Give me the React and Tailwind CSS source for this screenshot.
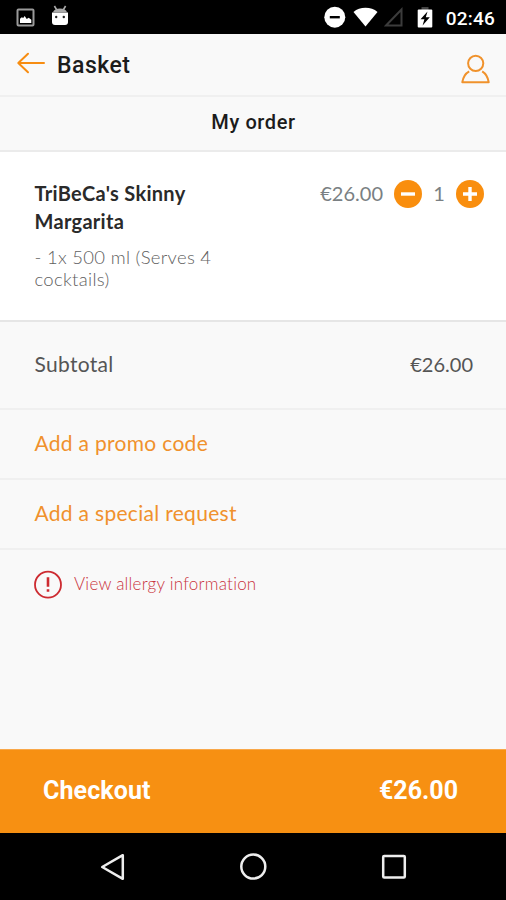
import { useState } from 'react';

const PRICE = 26;

const formatPrice = (value) => `€${value.toFixed(2)}`;

const StatusBar = () => (
    <div className="h-[34px] bg-black text-white flex items-center pl-4 pr-[11px] shrink-0">
        <svg width="19" height="19" viewBox="0 0 19 19" className="shrink-0">
            <rect x="1.5" y="1.5" width="16" height="16" rx="1" fill="none" stroke="#9a9a9a" strokeWidth="2" />
            <path d="M4 15v-4.2l1.8-1.6 1.4.8 1.5-2 2 3 2-1.2 2.6 2V15z" fill="#fff" />
        </svg>
        <svg width="18" height="21" viewBox="0 0 18 21" className="ml-4 -mt-1 shrink-0">
            <path d="M3.4 1l2.4 4M14.6 1l-2.4 4" stroke="#aaa" strokeWidth="1.6" />
            <path d="M2 7.2Q3.5 3.5 9 3.5T16 7.2z" fill="#aaa" />
            <path d="M1 7.5h16v9.5q0 3-3 3H4q-3 0-3-3z" fill="#fff" />
            <circle cx="5.2" cy="12" r="1.2" fill="#222" />
            <circle cx="12.8" cy="12" r="1.2" fill="#222" />
        </svg>
        <div className="flex-1" />
        <svg width="22" height="22" viewBox="0 0 22 22" className="shrink-0">
            <circle cx="10.8" cy="11.2" r="10.5" fill="#fff" />
            <rect x="5.8" y="10" width="10" height="2.4" fill="#000" />
        </svg>
        <svg width="25" height="20" viewBox="0 0 25 20" className="ml-[7px] shrink-0">
            <path d="M.5 5Q5.5.8 12.5.8T24.500 5L12.500 19.500z" fill="#fff" />
        </svg>
        <svg width="20" height="20" viewBox="0 0 20 20" className="ml-[6px] shrink-0">
            <path d="M2 18.500L17.500 2.500v16z" fill="none" stroke="#3c3c3c" strokeWidth="2" />
        </svg>
        <svg width="16" height="22" viewBox="0 0 16 22" className="ml-[13px] shrink-0">
            <rect x="4.5" y="1" width="7" height="3" fill="#444" />
            <rect x=".7" y="3.5" width="14.6" height="18" rx="1" fill="#fff" />
            <path d="M10.5 5.5L3.5 13.3h3.9L5.600 19.500 12.800 11.300H8.800z" fill="#000" />
        </svg>
        <span className="ml-[13px] text-[19px] leading-none font-medium tracking-[0.2px] mt-[3px]">02:46</span>
    </div>
);

const Header = () => (
    <header className="h-[63px] border-b-2 border-[#f0f0f0] flex items-center px-4 shrink-0">
        <button aria-label="Back" className="pb-1">
            <svg width="29" height="22" viewBox="0 0 29 22" fill="none" stroke="#f78d12" strokeWidth="2" strokeLinecap="round" strokeLinejoin="round">
                <path d="M28 11H2.5M12 1.8L2.3 11l9.7 9.2" />
            </svg>
        </button>
        <h1 className="ml-3 pt-[3px] text-[23px] font-medium tracking-[0.5px] text-[#1c1c1c]">Basket</h1>
        <button aria-label="Account" className="ml-auto mt-2">
            <svg width="29" height="30" viewBox="0 0 29 30" fill="none" stroke="#f0922c" strokeWidth="2" strokeLinejoin="round">
                <circle cx="14.7" cy="9.3" r="7.6" />
                <path d="M8.2 17.3Q2.5 20.5 1.3 28.2h26.4Q26.5 20.5 21.2 17.3" />
            </svg>
        </button>
    </header>
);

const QuantityButton = ({ label, path, onClick }) => (
    <button aria-label={label} onClick={onClick} className="size-7 rounded-full bg-[#f98e0e] shrink-0">
        <svg width="28" height="28" viewBox="0 0 28 28" stroke="#fff" strokeWidth="3.4">
            <path d={path} />
        </svg>
    </button>
);

const LinkRow = ({ children }) => (
    <button className="block w-full text-left pl-[34.5px] pb-[3px] border-b-2 border-[#f0f0f0] text-[#f0912d] text-[21px] tracking-[0.3px] font-['Lato',sans-serif] shrink-0 h-[70px]">
        {children}
    </button>
);

const NavBar = () => (
    <nav className="h-[67px] bg-black flex items-center justify-center gap-[113px] shrink-0">
        <svg width="28" height="28" viewBox="0 0 28 28" fill="none" stroke="#eee" strokeWidth="2.5" strokeLinejoin="round">
            <path d="M4.2 14L24.8 2.2v23.6z" />
        </svg>
        <svg width="28" height="28" viewBox="0 0 28 28" fill="none" stroke="#eee" strokeWidth="2.5">
            <circle cx="14.3" cy="13.6" r="12" />
        </svg>
        <svg width="28" height="28" viewBox="0 0 28 28" fill="none" stroke="#eee" strokeWidth="2.5">
            <rect x="3.2" y="3" width="21.6" height="21.6" rx="1" />
        </svg>
    </nav>
);

const App = () => {
    const [quantity, setQuantity] = useState(1);
    const total = formatPrice(PRICE * quantity);

    return (
        <div className="w-[506px] h-[900px] flex flex-col overflow-hidden bg-[#f9f9f9] font-['Roboto',sans-serif]">
            <StatusBar />
            <Header />
            <h2 className="h-[55px] pb-1 pl-px border-b-2 border-[#ebebeb] flex items-center justify-center text-[20px] font-medium tracking-[0.6px] text-[#1c1c1c] shrink-0">
                My order
            </h2>
            <section className="h-[170px] bg-white border-b-2 border-[#e6e6e6] pl-[34.5px] pr-[22px] pt-7 flex items-start justify-between font-['Lato',sans-serif] shrink-0">
                <div className="w-[190px] -mt-px">
                    <h3 className="text-[20px] leading-7 font-bold tracking-[0.3px] text-[#2a2a2a]">TriBeCa's Skinny Margarita</h3>
                    <p className="mt-[11px] text-[18.5px] leading-[22px] tracking-[0.3px] font-light text-[#606060]">- 1x 500 ml (Serves 4 cocktails)</p>
                </div>
                <div className="flex items-center h-7 text-[20px] leading-7 text-[#7a7f83]">
                    <span className="mr-[11px] pb-[2px]">{total}</span>
                    <QuantityButton label="Remove one" path="M7 14h14" onClick={() => setQuantity(Math.max(1, quantity - 1))} />
                    <span className="w-[34px] pb-[2px] text-center">{quantity}</span>
                    <QuantityButton label="Add one" path="M7 14h14M14 7v14" onClick={() => setQuantity(quantity + 1)} />
                </div>
            </section>
            <div className="h-[88px] pb-[3px] border-b-2 border-[#f0f0f0] pl-[34.5px] pr-[33px] flex items-center justify-between text-[20px] text-[#555] font-['Lato',sans-serif] shrink-0">
                <span className="text-[21px] tracking-[0.3px]">Subtotal</span>
                <span>{total}</span>
            </div>
            <LinkRow>Add a promo code</LinkRow>
            <LinkRow>Add a special request</LinkRow>
            <button className="flex items-center pl-[34px] mt-5 font-['Lato',sans-serif] shrink-0">
                <svg width="28" height="30" viewBox="0 0 28 30" fill="none" stroke="#cd2b31">
                    <circle cx="14" cy="14.7" r="13" strokeWidth="1.8" />
                    <path d="M14 7.2v9.5M14 19.2v2.5" strokeWidth="2.6" />
                </svg>
                <span className="ml-[12px] pb-[2px] text-[17px] tracking-[0.23px] font-light text-[#c9343c]">View allergy information</span>
            </button>
            <button className="mt-auto h-[84px] pb-[2px] bg-[#f79012] border-t border-[#f9a84a] pl-[43px] pr-12 flex items-center justify-between text-[25px] font-bold text-white shrink-0">
                <span className="tracking-[0.1px]">Checkout</span>
                <span>{total}</span>
            </button>
            <NavBar />
        </div>
    );
};

export default App;
